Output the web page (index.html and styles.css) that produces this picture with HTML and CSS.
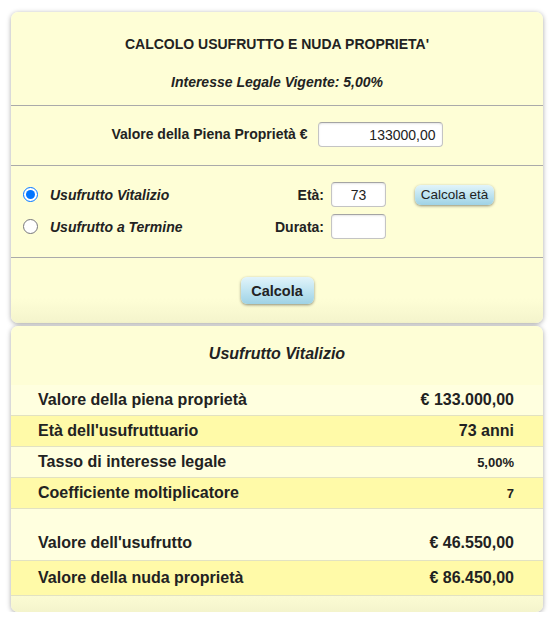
FILE: index.html
```html
<!DOCTYPE html>
<html lang="it">
<head>
<meta charset="utf-8">
<title>Calcolo usufrutto</title>
<link rel="stylesheet" href="styles.css">
</head>
<body>
<div class="page">
  <section class="card form-card">
    <div class="sec sec-head">
      <div class="title">CALCOLO USUFRUTTO E NUDA PROPRIETA'</div>
      <div class="subtitle">Interesse Legale Vigente: 5,00%</div>
    </div>
    <div class="sec sec-value">
      <label class="value-label">Valore della Piena Proprietà €</label>
      <input class="field field-value" type="text" value="133000,00">
    </div>
    <div class="sec sec-type">
      <div class="type-row">
        <input class="radio" type="radio" name="tipo" checked>
        <span class="type-name">Usufrutto Vitalizio</span>
        <span class="field-label">Età:</span>
        <input class="field field-small" type="text" value="73">
        <button class="btn btn-small">Calcola età</button>
      </div>
      <div class="type-row">
        <input class="radio" type="radio" name="tipo">
        <span class="type-name">Usufrutto a Termine</span>
        <span class="field-label">Durata:</span>
        <input class="field field-small" type="text" value="">
      </div>
    </div>
    <div class="sec sec-action">
      <button class="btn btn-main">Calcola</button>
    </div>
  </section>

  <section class="card result-card">
    <div class="result-title">Usufrutto Vitalizio</div>
    <div class="rows">
      <div class="row light"><span>Valore della piena proprietà</span><span>€ 133.000,00</span></div>
      <div class="row yellow"><span>Età dell'usufruttuario</span><span>73 anni</span></div>
      <div class="row light"><span>Tasso di interesse legale</span><span class="small">5,00%</span></div>
      <div class="row yellow"><span>Coefficiente moltiplicatore</span><span class="small">7</span></div>
      <div class="spacer"></div>
      <div class="row light tall"><span>Valore dell'usufrutto</span><span>€ 46.550,00</span></div>
      <div class="row yellow tall2"><span>Valore della nuda proprietà</span><span>€ 86.450,00</span></div>
    </div>
  </section>
</div>
</body>
</html>
```

FILE: styles.css
```css
* { box-sizing: border-box; }
html, body { margin: 0; padding: 0; background: #ffffff; }
body {
  font-family: "Liberation Sans", Arial, sans-serif;
  color: #222222;
}
.page {
  padding: 12px 14px 0 11px;
  display: flex;
  flex-direction: column;
  gap: 3px;
}
.card {
  background: linear-gradient(to bottom, #fefed6 0%, #fefed6 92%, #f4f4cc 100%);
  border-radius: 7px;
  box-shadow: 0 1px 5px rgba(0,0,0,0.35);
}
.form-card { height: 311px; }
.sec { border-bottom: 1px solid #aaaaaa; }
.sec:last-child { border-bottom: none; }
.sec-head {
  padding: 24px 0 15px;
  text-align: center;
  font-weight: bold;
  font-size: 14px;
}
.title { line-height: 16px; }
.subtitle { line-height: 16px; margin-top: 22px; font-style: italic; }
.sec-value {
  height: 60px;
  padding-top: 16px;
  display: flex;
  justify-content: center;
  align-items: flex-start;
  gap: 10px;
}
.value-label {
  font-weight: bold;
  font-size: 14px;
  line-height: 25px;
}
.field {
  height: 25px;
  border: 1px solid #c4c4c4;
  border-top-color: #a4a4a4;
  border-radius: 4px;
  background: #ffffff;
  box-shadow: inset 0 1px 2px rgba(0,0,0,0.10);
  font-family: "Liberation Sans", Arial, sans-serif;
  font-size: 14px;
  color: #222;
  padding: 0 6px;
  margin: 0;
  outline: none;
}
.field-value { width: 125px; text-align: right; }
.field-small { width: 55px; text-align: center; }
.sec-type {
  height: 92px;
  padding: 16px 0 0 12px;
  display: flex;
  flex-direction: column;
  gap: 7px;
}
.type-row {
  display: flex;
  align-items: center;
  height: 25px;
}
.radio {
  width: 15px;
  height: 15px;
  margin: 0 12px 0 0;
  accent-color: #0075ff;
}
.type-name {
  width: 200px;
  font-size: 14px;
  font-weight: bold;
  font-style: italic;
}
.field-label {
  width: 74px;
  text-align: right;
  font-size: 14px;
  font-weight: bold;
  margin-right: 7px;
}
.btn {
  border: none;
  border-radius: 6px;
  background: linear-gradient(to bottom, #e2f4fa 0%, #bfe4f1 50%, #9fd2e5 100%);
  box-shadow: 0 1px 3px rgba(0,0,0,0.45);
  font-family: "Liberation Sans", Arial, sans-serif;
  color: #222;
  padding: 0;
  cursor: pointer;
}
.btn-small {
  margin-left: 29px;
  width: 79px;
  height: 20px;
  font-size: 13.5px;
}
.sec-action {
  padding-top: 19px;
  display: flex;
  justify-content: center;
}
.btn-main {
  width: 73px;
  height: 27px;
  font-size: 14.5px;
  font-weight: bold;
}
.result-card {
  height: 286px;
  padding-top: 19px;
}
.result-title {
  text-align: center;
  font-size: 16px;
  font-weight: bold;
  font-style: italic;
  line-height: 18px;
  margin-bottom: 22px;
}
.rows { display: flex; flex-direction: column; }
.row {
  display: flex;
  justify-content: space-between;
  align-items: center;
  height: 31px;
  padding: 0 29px 0 27px;
  border-bottom: 1px solid #e2e2c2;
  font-size: 16px;
  font-weight: bold;
}
.row.light { background: #ffffdf; }
.row.yellow { background: #fffaa8; }
.row.tall { height: 36px; padding-top: 1px; }
.row.tall2 { height: 35px; }
.row .small { font-size: 13px; }
.spacer { height: 16px; background: #ffffdf; }
```
